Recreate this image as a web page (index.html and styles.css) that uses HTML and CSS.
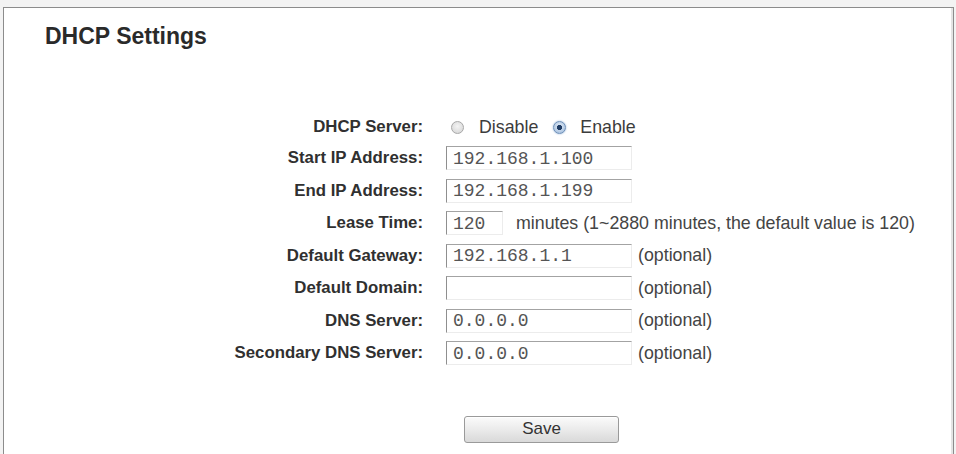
FILE: index.html
```html
<!DOCTYPE html>
<html lang="en">
<head>
<meta charset="utf-8">
<title>DHCP Settings</title>
<link rel="stylesheet" href="styles.css">
</head>
<body>
  <div class="frame">
    <h1 class="title">DHCP Settings</h1>
    <form class="settings" onsubmit="return false">
      <div class="form">
        <span class="label">DHCP Server:</span>
        <div class="field">
          <label class="choice"><input class="radio" type="radio" name="dhcp" value="0"><span>Disable</span></label>
          <label class="choice"><input class="radio" type="radio" name="dhcp" value="1" checked><span>Enable</span></label>
        </div>

        <span class="label">Start IP Address:</span>
        <div class="field"><input class="text" type="text" value="192.168.1.100"></div>

        <span class="label">End IP Address:</span>
        <div class="field"><input class="text" type="text" value="192.168.1.199"></div>

        <span class="label">Lease Time:</span>
        <div class="field"><input class="text short" type="text" value="120"><span class="hint wide">minutes (1~2880 minutes, the default value is 120)</span></div>

        <span class="label">Default Gateway:</span>
        <div class="field"><input class="text" type="text" value="192.168.1.1"><span class="hint">(optional)</span></div>

        <span class="label">Default Domain:</span>
        <div class="field"><input class="text" type="text" value=""><span class="hint">(optional)</span></div>

        <span class="label">DNS Server:</span>
        <div class="field"><input class="text" type="text" value="0.0.0.0"><span class="hint">(optional)</span></div>

        <span class="label">Secondary DNS Server:</span>
        <div class="field"><input class="text" type="text" value="0.0.0.0"><span class="hint">(optional)</span></div>
      </div>

      <div class="actions">
        <button class="save" type="submit">Save</button>
      </div>
    </form>
  </div>
</body>
</html>
```

FILE: styles.css
```css
html, body {
  margin: 0;
  height: 100%;
}

body {
  background: #f3f3f3;
  font-family: "Liberation Sans", Arial, sans-serif;
  color: #333;
  overflow: hidden;
}

.frame {
  box-sizing: border-box;
  margin: 7px 2px 0 3px;
  height: calc(100% - 7px);
  background: #fff;
  border: 1px solid #8c8c8c;
  border-bottom: none;
  box-shadow: inset -2px 0 0 #e4e4e4;
  padding-top: 15px;
}

.title {
  margin: 0 0 0 41px;
  font-size: 23px;
  line-height: 26px;
  font-weight: bold;
  color: #2a2a2a;
}

.form {
  margin-top: 63px;
  display: grid;
  grid-template-columns: 419px 1fr;
  grid-template-rows: 30px;
  grid-auto-rows: 32.5px;
  column-gap: 23px;
  align-items: center;
}

.label {
  text-align: right;
  font-size: 16.8px;
  font-weight: bold;
  color: #303030;
  white-space: nowrap;
}

.field {
  display: flex;
  align-items: center;
  font-size: 17.8px;
  color: #3c3c3c;
}

.choice {
  display: flex;
  align-items: center;
}

.radio {
  appearance: none;
  -webkit-appearance: none;
  box-sizing: border-box;
  width: 13px;
  height: 13px;
  margin: 0 15px 0 5px;
  border-radius: 50%;
  border: 1px solid #a8a8a8;
  background: radial-gradient(circle at 50% 40%, #f4f4f4 0%, #d2d2d2 100%);
}

.choice + .choice .radio {
  margin: 0 14px 0 15px;
}

.radio:checked {
  border-color: #6d8fb8;
  background:
    radial-gradient(circle, #1f3c64 0 2.3px, transparent 2.9px),
    radial-gradient(circle at 50% 40%, #e4eef9 0%, #9ab6d8 100%);
  box-shadow: 0 0 2px #8fb0d8;
}

.text {
  box-sizing: border-box;
  width: 186px;
  height: 24px;
  margin: 0;
  padding: 1px 0 0 6px;
  border: 1px solid;
  border-color: #a3a3a3 #ececec #ececec #8f8f8f;
  background: #fff;
  font-family: "Liberation Mono", "Courier New", monospace;
  font-size: 18px;
  color: #555;
  outline: none;
}

.text.short {
  width: 57px;
}

.hint {
  margin-left: 6px;
  color: #444;
  white-space: nowrap;
}

.hint.wide {
  margin-left: 13px;
}

.actions {
  display: flex;
  padding-left: 460px;
  margin-top: 46px;
}

.save {
  box-sizing: border-box;
  width: 155px;
  height: 27px;
  border: 1px solid #9a9a9a;
  border-radius: 3px;
  background: linear-gradient(#fbfbfb, #e9e9e9 55%, #d9d9d9);
  box-shadow: inset 0 1px 0 #fff;
  font-family: "Liberation Sans", Arial, sans-serif;
  font-size: 17px;
  color: #333;
  padding: 0;
}
```
